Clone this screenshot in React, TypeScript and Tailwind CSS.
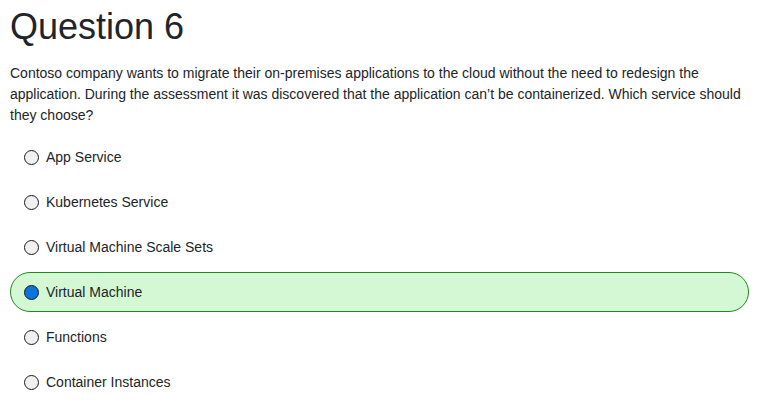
const options = [
  "App Service",
  "Kubernetes Service",
  "Virtual Machine Scale Sets",
  "Virtual Machine",
  "Functions",
  "Container Instances",
];

const selected = 3;

export default function App() {
  return (
    <div className="min-h-screen bg-white pl-[10px] pr-[9px] pt-[5px] text-[#212529] [font-family:'Liberation_Sans',Arial,sans-serif]">
      <h1 className="mb-[15px] text-[36px] leading-[43px] font-normal">Question 6</h1>
      <p className="mb-[11px] text-[14px] leading-[21px]">
        Contoso company wants to migrate their on-premises applications to the cloud without the need to redesign the
        application. During the assessment it was discovered that the application can’t be containerized. Which service should
        they choose?
      </p>
      <div className="flex flex-col gap-[5px]">
        {options.map((opt, i) => {
          const isSel = i === selected;
          return (
            <div
              key={opt}
              className={
                isSel
                  ? "flex h-[40px] items-center gap-[7px] rounded-full border border-[#1a8c1a] bg-[#d4f8d4] pl-[13px]"
                  : "flex h-[40px] items-center gap-[7px] rounded-full border border-transparent pl-[13px]"
              }
            >
              {/* radio */}
              <span
                className={
                  isSel
                    ? "h-[15px] w-[15px] shrink-0 rounded-full border-[1.5px] border-[#1b1b1b] bg-[#0b74de]"
                    : "h-[15px] w-[15px] shrink-0 rounded-full border-[1.5px] border-[#1b1b1b] bg-[#f0f0f0]"
                }
              />
              <span className="text-[14px] leading-[21px]">{opt}</span>
            </div>
          );
        })}
      </div>
    </div>
  );
}
